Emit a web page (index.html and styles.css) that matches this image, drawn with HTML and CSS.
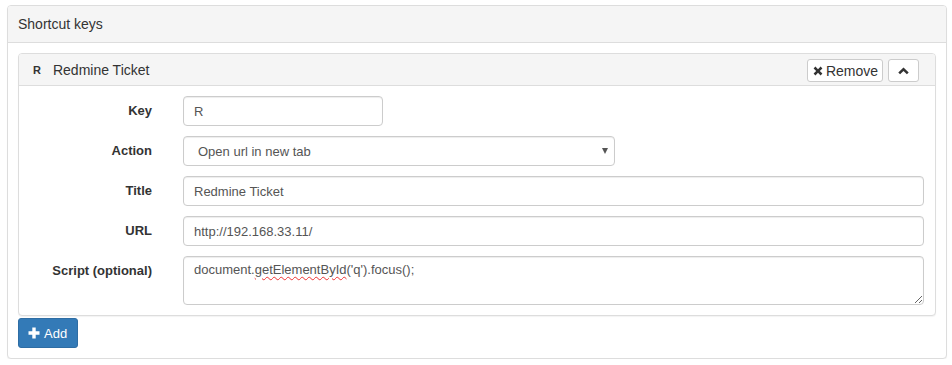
FILE: index.html
```html
<!DOCTYPE html>
<html>
<head>
<meta charset="utf-8">
<link rel="stylesheet" href="styles.css">
</head>
<body>
<div class="panel outer">
  <div class="outer-heading">Shortcut keys</div>
  <div class="outer-body">
    <div class="panel inner">
      <div class="inner-heading">
        <span class="key-badge">R</span>
        <span class="inner-title">Redmine Ticket</span>
        <div class="actions">
          <button class="btn btn-remove" type="button">
            <svg class="ico ico-x" width="10" height="10" viewBox="0 0 10 10"><path d="M0.6 2.4 L2.4 0.6 L5 3.2 L7.6 0.6 L9.4 2.4 L6.8 5 L9.4 7.6 L7.6 9.4 L5 6.8 L2.4 9.4 L0.6 7.6 L3.2 5 Z" fill="#333"/></svg>Remove
          </button>
          <button class="btn btn-collapse" type="button">
            <svg class="ico" width="11" height="8" viewBox="0 0 11 8"><path d="M0.3 5.4 L5.5 0.4 L10.7 5.4 L8.9 7.3 L5.5 4 L2.1 7.3 Z" fill="#333"/></svg>
          </button>
        </div>
      </div>
      <div class="form-grid">
        <label class="form-label">Key</label>
        <div><input class="form-control input-key" type="text" value="R"></div>
        <label class="form-label">Action</label>
        <div><span class="select-wrap"><select class="form-control select-action"><option>Open url in new tab</option></select></span></div>
        <label class="form-label">Title</label>
        <div><input class="form-control" type="text" value="Redmine Ticket"></div>
        <label class="form-label">URL</label>
        <div><input class="form-control" type="text" value="http://192.168.33.11/"></div>
        <label class="form-label">Script (optional)</label>
        <div><div class="form-control script-area">document.<span class="spell">getElementById</span>('q').focus();</div></div>
      </div>
    </div>
    <button class="btn btn-primary" type="button">
      <svg class="ico" width="12" height="12" viewBox="0 0 12 12"><path d="M4.3 0.5 H7.7 V4.3 H11.5 V7.7 H7.7 V11.5 H4.3 V7.7 H0.5 V4.3 H4.3 Z" fill="#fff"/></svg>Add
    </button>
  </div>
</div>
</body>
</html>
```
FILE: styles.css
```css
* { box-sizing: border-box; }
html, body { margin: 0; background: #fff; }
body {
  padding: 5px 5px 0 7px;
  font-family: "Liberation Sans", Arial, sans-serif;
  font-size: 13px;
  color: #333;
}
.panel {
  border: 1px solid #ddd;
  border-radius: 4px;
  background: #fff;
  box-shadow: 0 1px 1px rgba(0,0,0,.05);
}
.outer-heading {
  background: #f5f5f5;
  border-bottom: 1px solid #ddd;
  border-radius: 3px 3px 0 0;
  padding: 10px 10px;
  font-size: 14px;
  line-height: 16px;
  color: #333;
}
.outer-body {
  padding: 10px 10px 10px 10px;
}
.inner-heading {
  display: flex;
  align-items: center;
  background: #f5f5f5;
  border-bottom: 1px solid #ddd;
  border-radius: 3px 3px 0 0;
  padding: 5px 16px 3px 14px;
  height: 32px;
}
.key-badge {
  font-weight: bold;
  font-size: 11px;
  margin-right: 12px;
  margin-top: -2px;
}
.inner-title {
  font-size: 14px;
  margin-top: -2px;
}
.actions {
  margin-left: auto;
  display: flex;
  gap: 5px;
}
.btn {
  font-family: "Liberation Sans", Arial, sans-serif;
  display: inline-flex;
  align-items: center;
  justify-content: center;
  border: 1px solid #ccc;
  border-radius: 3px;
  background: #fff;
  color: #333;
  cursor: pointer;
}
.ico { flex-shrink: 0; display: block; }
.btn-remove {
  height: 23px;
  width: 76px;
  font-size: 14px;
  padding: 0 4px 0 5px;
}
.ico-x { margin-right: 3px; }
.btn-collapse {
  height: 23px;
  width: 31px;
  padding: 0;
}
.form-grid {
  display: grid;
  grid-template-columns: 133px 1fr;
  column-gap: 31px;
  row-gap: 10px;
  padding: 10px 11px 10px 0;
}
.form-label {
  text-align: right;
  font-weight: bold;
  padding-top: 6px;
  line-height: 18px;
}
.form-control {
  display: block;
  width: 100%;
  height: 30px;
  padding: 5px 10px;
  font-family: "Liberation Sans", Arial, sans-serif;
  font-size: 13px;
  color: #555;
  background: #fff;
  border: 1px solid #ccc;
  border-radius: 4px;
  box-shadow: inset 0 1px 1px rgba(0,0,0,.075);
  outline: none;
}
.input-key { width: 200px; }
.select-wrap {
  position: relative;
  display: block;
  width: 432px;
}
.select-action {
  -webkit-appearance: none;
  appearance: none;
  padding-left: 14px;
  color: #555;
}
.select-wrap::after {
  content: "";
  position: absolute;
  right: 7px;
  top: 12px;
  border-left: 3.5px solid transparent;
  border-right: 3.5px solid transparent;
  border-top: 6px solid #555;
}
.script-area {
  height: 49px;
  line-height: 18px;
  padding: 4px 10px;
  overflow: auto;
  resize: vertical;
}
.spell {
  text-decoration: underline wavy #e33;
  text-decoration-thickness: 1px;
  text-underline-offset: 2px;
}
.btn-primary {
  margin-top: 2px;
  height: 30px;
  width: 60px;
  padding: 0 9px 0 9px;
  background: #337ab7;
  border-color: #2e6da4;
  color: #fff;
  font-size: 13px;
  justify-content: flex-start;
}
.btn-primary .ico { margin-right: 4px; }
```
